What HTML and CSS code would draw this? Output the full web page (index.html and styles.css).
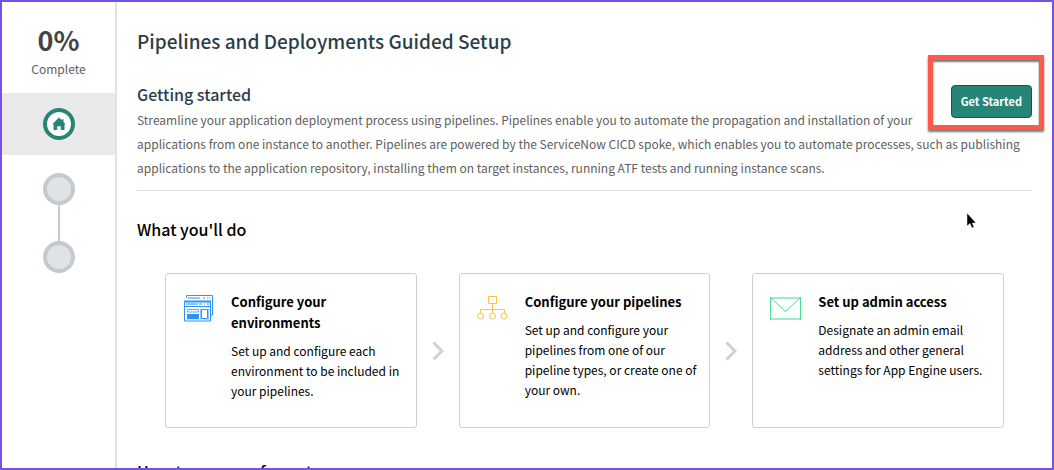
FILE: index.html
```html
<!DOCTYPE html>
<html lang="en">
<head>
<meta charset="utf-8">
<title>Pipelines and Deployments Guided Setup</title>
<link rel="stylesheet" href="styles.css">
</head>
<body>
<div class="app">
  <nav class="sidebar" aria-label="Setup progress">
    <div class="progress">
      <div class="progress-value">0%</div>
      <div class="progress-label">Complete</div>
    </div>
    <a class="home" href="#" aria-label="Home">
      <svg class="home-icon" viewBox="0 0 32 32" aria-hidden="true">
        <circle cx="16" cy="16" r="14" fill="#fff" stroke="#278577" stroke-width="4"/>
        <path d="M16 9.5 L9.3 16.2 H10.5 V22 H14.2 V18.2 H17.8 V22 H21.5 V16.2 H22.7 L20.5 14 V11.2 H18.8 V12.3 Z" fill="#278577"/>
      </svg>
    </a>
    <div class="steps">
      <span class="step"></span>
      <span class="connector"></span>
      <span class="step"></span>
    </div>
  </nav>
  <main class="content">
    <h1 class="title">Pipelines and Deployments Guided Setup</h1>
    <section class="intro">
      <div class="action">
        <button class="start-button" type="button">Get Started</button>
        <span class="highlight"></span>
      </div>
      <h2 class="intro-title">Getting started</h2>
      <p class="intro-text">Streamline your application deployment process using pipelines. Pipelines enable you to automate the propagation and installation of your applications from one instance to another. Pipelines are powered by the ServiceNow CICD spoke, which enables you to automate processes, such as publishing applications to the application repository, installing them on target instances, running ATF tests and running instance scans.</p>
    </section>
    <h2 class="section-title">What you'll do</h2>
    <div class="cards">
      <article class="card">
        <svg class="card-icon" viewBox="0 -2 32 34" fill="none" aria-hidden="true">
          <path d="M3.5 5 V2.5 H29.5 V22 H28" stroke="#2b93fb"/>
          <path d="M5 5 H17 M20 5 H22 M24 5 H25 M26 5 H27" stroke="#2b93fb"/>
          <path d="M1 8.5 H28" stroke="#2b93fb" stroke-width="2"/>
          <path d="M1.5 8 V28 H27.5 V8" stroke="#2b93fb"/>
          <path d="M3 11 H15 M16 11 H19 M21 11 H22 M24 11 H26" stroke="#8ec5fd" stroke-width="2"/>
          <path d="M2 13.5 H27" stroke="#2b93fb"/>
          <path d="M4.5 16.5 H15.5 V19 H4.5 Z" stroke="#60affc"/>
          <path d="M4 21 H16 V26 H4 Z" fill="#2b93fb"/>
          <path d="M18.5 16.5 H24.5 V25.5 H18.5 Z" stroke="#2b93fb"/>
          <path d="M17.5 16 V26 M25.5 16 V26 M2 27 H27" stroke="#8ec5fd"/>
        </svg>
        <div class="card-body">
          <h3 class="card-title">Configure your environments</h3>
          <p class="card-text">Set up and configure each environment to be included in your pipelines.</p>
        </div>
      </article>
      <svg class="arrow" viewBox="0 0 12 20" aria-hidden="true"><path d="M1.5 1.5 L10 10 L1.5 18.5"/></svg>
      <article class="card">
        <svg class="card-icon" viewBox="0 -2 32 34" fill="none" stroke="#f9c440" aria-hidden="true">
          <path d="M11.5 3.5 H19.5 V10.5 H11.5 Z M15.5 11 V20 M3.5 20 V16.5 H27.5 V20"/>
          <circle cx="3.5" cy="23" r="3"/><circle cx="15.5" cy="23" r="3"/><circle cx="27" cy="23" r="3"/>
        </svg>
        <div class="card-body">
          <h3 class="card-title">Configure your pipelines</h3>
          <p class="card-text">Set up and configure your pipelines from one of our pipeline types, or create one of your own.</p>
        </div>
      </article>
      <svg class="arrow" viewBox="0 0 12 20" aria-hidden="true"><path d="M1.5 1.5 L10 10 L1.5 18.5"/></svg>
      <article class="card">
        <svg class="card-icon" viewBox="0 -2 32 34" fill="none" stroke="#4ade94" aria-hidden="true">
          <path d="M0 5 H31 M0 26 H31" stroke="#9aefc6" stroke-width="2"/>
          <path d="M.5 4 V27 M30.5 4 V27 M1 5 L15.5 18.5 L30 5"/>
        </svg>
        <div class="card-body">
          <h3 class="card-title">Set up admin access</h3>
          <p class="card-text">Designate an admin email address and other general settings for App Engine users.</p>
        </div>
      </article>
    </div>
    <h2 class="section-title">How to manage format</h2>
  </main>
</div>
<svg class="cursor" viewBox="0 0 12 19" aria-hidden="true"><path d="M1 1 V14 L4 11.5 L6 16 L8 15 L6.2 11 H10 Z" fill="#000" stroke="#eee" stroke-width=".5"/></svg>
</body>
</html>
```
FILE: styles.css
```css
* { box-sizing: border-box; }

body {
  margin: 0;
  font-family: "Noto Sans CJK SC", "Open Sans", sans-serif;
  font-size: 12px;
  color: #000;
  background: #fff;
}

h1, h2, h3, p { margin: 0; }

.app {
  display: flex;
  height: 100vh;
  overflow: hidden;
  border: 2px solid #7352e8;
}

.sidebar {
  flex: 0 0 115px;
  border-right: 2px solid #dfe3e8;
  text-align: center;
}

.progress {
  padding-top: 19px;
  height: 91px;
  color: #444;
}

.progress-value {
  font-size: 27px;
  font-weight: 700;
  line-height: 38px;
}

.progress-label {
  line-height: 20px;
  color: #606060;
}

.home {
  display: flex;
  align-items: center;
  justify-content: center;
  height: 62px;
  background: #e9e9e9;
}

.home-icon { width: 32px; height: 32px; }

.steps {
  display: flex;
  flex-direction: column;
  align-items: center;
  padding-top: 18px;
}

.step {
  width: 32px;
  height: 32px;
  border: 4px solid #c4c8cf;
  border-radius: 50%;
  background: #dfe3e6;
}

.connector {
  width: 2px;
  height: 36px;
  background: #c4c8cf;
}

.content {
  flex: 1;
  min-width: 0;
  padding: 23px 20px 0;
}

.title {
  font-size: 19px;
  font-weight: 500;
  line-height: 32px;
  color: #293e4a;
}

.intro {
  padding: 28px 0 10px;
  border-bottom: 1px solid #e2e2e2;
}

.action {
  position: relative;
  float: right;
  margin-left: 16px;
}

.start-button {
  display: block;
  height: 33px;
  padding: 0 9px 2px;
  border: 1px solid #15594d;
  border-radius: 4px;
  background: #278577;
  color: #fff;
  font: 700 11px/20px "Noto Sans CJK SC", "Open Sans", sans-serif;
}

.highlight {
  position: absolute;
  inset: -30px -12px -12px -23px;
  border: 5px solid #ff594c;
  box-shadow: 0 2px 2px #777, inset 0 2px 2px #777;
  pointer-events: none;
}

.intro-title {
  margin-bottom: 5px;
  font-size: 16px;
  font-weight: 500;
  line-height: 18px;
  color: #293e4a;
}

.intro-text {
  line-height: 24px;
  color: #606060;
}

.section-title {
  margin-top: 26px;
  font-size: 16px;
  font-weight: 500;
  line-height: 24px;
}

.cards {
  display: flex;
  align-items: center;
  margin: 32px 28px 31px;
}

.card {
  display: flex;
  flex: 1 1 0;
  min-width: 0;
  gap: 16px;
  align-self: stretch;
  min-height: 155px;
  padding: 17px 8px 16px 17px;
  border: 1px solid #cdd1d5;
  border-radius: 3px;
}

.card-icon { flex: none; width: 32px; height: 34px; }

.card-title {
  font-size: 13px;
  font-weight: 700;
  line-height: 21px;
}

.card-text {
  margin-top: 8px;
  line-height: 20px;
}

.arrow {
  flex: none;
  width: 12px;
  height: 20px;
  margin: 0 15px;
  fill: none;
  stroke: #cbd3da;
  stroke-width: 3;
}

.cursor {
  position: absolute;
  left: 92%;
  top: 212px;
  width: 12px;
  height: 19px;
  margin-left: -4px;
}
```
